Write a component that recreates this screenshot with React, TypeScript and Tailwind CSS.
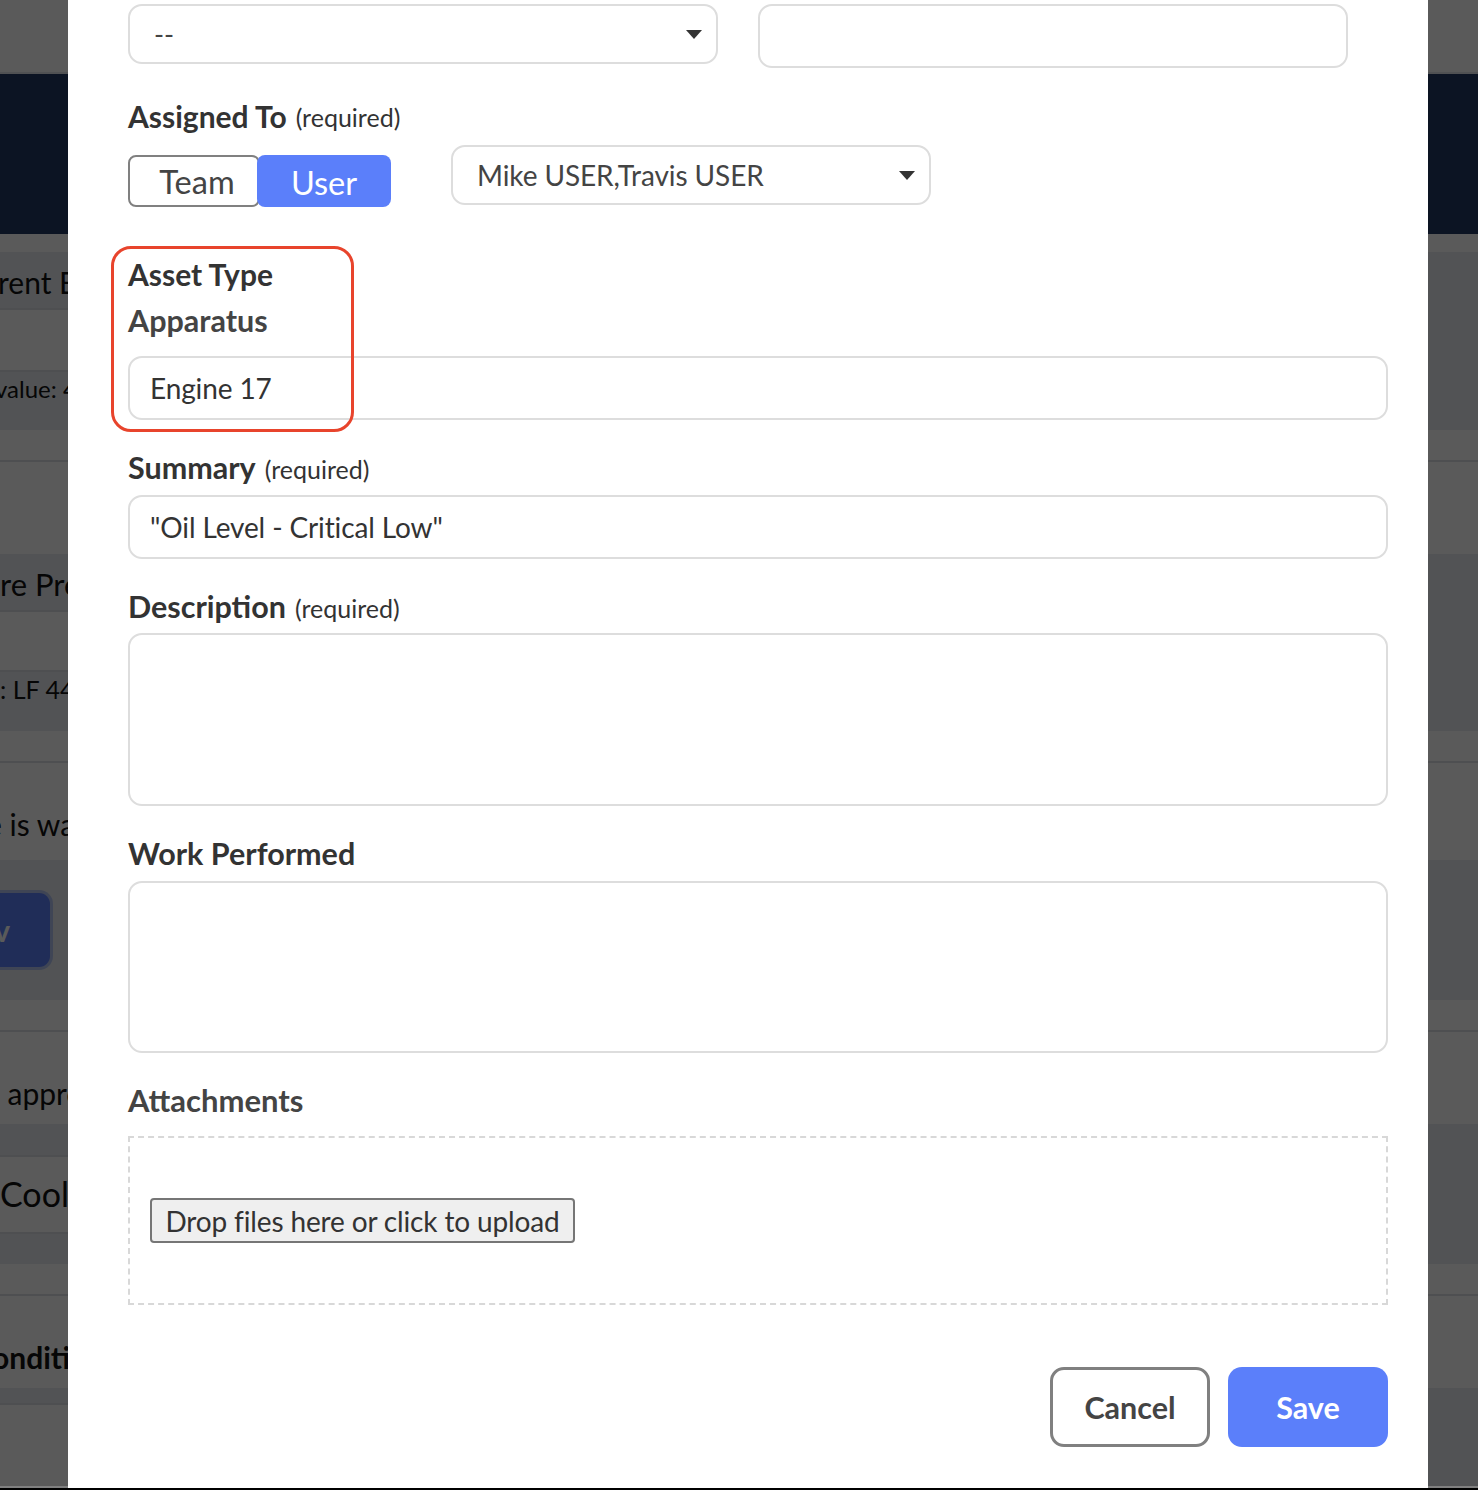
const lato = "font-['Lato','Noto_Sans',sans-serif]";

function Caret() {
  return (
    <svg width="16" height="9" viewBox="0 0 16 9" className="shrink-0">
      <polygon points="0,0 16,0 8,9" fill="#333333" />
    </svg>
  );
}

function Label({
  children,
  hint,
  className = "text-[30.5px] text-[#333333]",
}: {
  children: React.ReactNode;
  hint?: boolean;
  className?: string;
}) {
  return (
    <div className="flex h-[36px] items-center gap-[9px] pb-[2px]">
      <span className={`font-bold ${className}`}>{children}</span>
      {hint && <span className="mt-[4px] text-[25px] text-[#333333]">(required)</span>}
    </div>
  );
}

function Select({ value, className }: { value: string; className: string }) {
  return (
    <div
      className={`flex h-[60px] items-center justify-between rounded-[14px] border-2 border-[#dddddd] bg-white text-[#444444] ${className}`}
    >
      <span>{value}</span>
      <Caret />
    </div>
  );
}

function TextField({ value }: { value: string }) {
  return (
    <div className="flex h-[64px] items-center rounded-[14px] border-2 border-[#dddddd] bg-white pl-[20px] text-[28px] tracking-[-0.12px] text-[#333333]">
      {value}
    </div>
  );
}

function Modal() {
  return (
    <div
      className={`absolute top-0 left-[68px] flex h-[1488px] w-[1360px] flex-col bg-white pt-[4px] pr-[40px] pl-[60px] ${lato}`}
    >
      <div className="flex items-start gap-[40px]">
        <Select value="--" className="w-[590px] pr-[14px] pl-[24px] text-[27px]" />
        <div className="h-[64px] w-[590px] rounded-[14px] border-2 border-[#dddddd]" />
      </div>

      <div className="mt-[31px]">
        <Label hint className="text-[30px] text-[#333333]">
          Assigned To
        </Label>
      </div>
      <div className="mt-[10px] flex items-start gap-[60px]">
        <div className="mt-[10px] flex h-[52px] text-[32.5px]">
          <div className="flex w-[132px] items-center justify-center rounded-[8px] border-2 border-[#808080] pt-[2px] pl-[6px] text-[#444444]">
            Team
          </div>
          <div className="-ml-[3px] flex w-[134px] items-center justify-center rounded-[8px] bg-[#5b7ffa] pt-[4px] text-white">
            User
          </div>
        </div>
        <Select
          value="Mike USER,Travis USER"
          className="w-[480px] pr-[14px] pl-[24px] text-[28px] tracking-[-0.1px]"
        />
      </div>

      <div className="mt-[50px]">
        <Label className="text-[30px] text-[#333333]">Asset Type</Label>
      </div>
      <div className="mt-[11px]">
        <Label className="text-[30.5px] text-[#444444]">Apparatus</Label>
      </div>
      <div className="mt-[16px]">
        <TextField value="Engine 17" />
      </div>

      <div className="mt-[31px]">
        <Label hint>Summary</Label>
      </div>
      <div className="mt-[8px]">
        <TextField value={'"Oil Level - Critical Low"'} />
      </div>

      <div className="mt-[31px]">
        <Label hint>Description</Label>
      </div>
      <textarea className="mt-[7px] block h-[173px] w-full resize-none rounded-[14px] border-2 border-[#dddddd]" />

      <div className="mt-[31px]">
        <Label>Work Performed</Label>
      </div>
      <textarea className="mt-[8px] block h-[172px] w-full resize-none rounded-[14px] border-2 border-[#dddddd]" />

      <div className="mt-[30px]">
        <Label className="text-[31px] text-[#444444]">Attachments</Label>
      </div>
      <div className="mt-[17px] flex h-[169px] items-center border-2 border-dashed border-[#d8d8d8] pl-[20px]">
        <button className="h-[45px] w-[425px] rounded-[4px] border-2 border-[#767676] bg-[#efefef] pb-[3px] text-[28px] tracking-[-0.15px] text-[#333333]">
          Drop files here or click to upload
        </button>
      </div>

      <div className="mt-[62px] flex justify-end gap-[18px]">
        <button className="h-[80px] w-[160px] rounded-[14px] border-[3px] border-[#808080] bg-white pt-[2px] text-[30.5px] font-bold text-[#444444]">
          Cancel
        </button>
        <button className="h-[80px] w-[160px] rounded-[14px] bg-[#5b7ffa] pt-[2px] text-[30.5px] font-bold text-white">
          Save
        </button>
      </div>

      {/* annotation over the asset fields */}
      <div className="absolute top-[246px] left-[43px] h-[186px] w-[243px] rounded-[20px] border-[3px] border-[#e8442c]" />
    </div>
  );
}

// page behind the dialog, only the slivers either side of it show
function Page() {
  return (
    <div className={`flex flex-col text-[#111111] ${lato}`}>
      <div className="h-[72px] bg-white" />
      <div className="h-[2px] bg-[#e2e4ea]" />
      <div className="h-[160px] bg-[#223963]" />
      <div className="h-[18px] bg-white" />
      <div className="h-[178px] bg-[#e8ebf1]">
        <div className="flex h-[58px] w-[68px] items-center overflow-hidden border-b-2 border-[#dcdfe6] pt-[4px] text-[30px] whitespace-nowrap">
          <span className="-ml-[2px]">rent Engine</span>
        </div>
        <div className="h-[62px] w-[68px] border-b-2 border-[#dcdfe6] bg-white" />
        <div className="-mt-[1px] w-[68px] overflow-hidden text-[24px] whitespace-nowrap">
          <span className="-ml-[5px]">value: 4</span>
        </div>
      </div>
      <div className="h-[30px] bg-white" />
      <div className="h-[2px] bg-[#dcdfe6]" />
      <div className="h-[92px] bg-white" />
      <div className="h-[177px] bg-[#e8ebf1]">
        <div className="flex h-[58px] w-[68px] items-center overflow-hidden border-b-2 border-[#dcdfe6] pt-[4px] text-[31px] whitespace-nowrap">
          <span>re Pres</span>
        </div>
        <div className="h-[60px] w-[68px] border-b-2 border-[#dcdfe6] bg-white" />
        <div className="-mt-[1px] w-[68px] overflow-hidden text-[25px] whitespace-nowrap">: LF 44</div>
      </div>
      <div className="h-[30px] bg-white" />
      <div className="h-[2px] bg-[#dcdfe6]" />
      <div className="flex h-[97px] items-end overflow-hidden bg-white pb-[13px] text-[30px] whitespace-nowrap">
        <span className="-ml-[14px]">e is wa</span>
      </div>
      <div className="flex h-[140px] items-center bg-[#e8ebf1]">
        <div className="flex h-[80px] w-[53px] items-center justify-end rounded-r-[14px] border-[3px] border-l-0 border-[#b2c3f0] bg-[#5b7ffa] pr-[40px] text-[30px] font-bold text-white">
          v
        </div>
      </div>
      <div className="h-[30px] bg-white" />
      <div className="h-[2px] bg-[#dcdfe6]" />
      <div className="flex h-[92px] items-end overflow-hidden bg-white pb-[8px] text-[30px] whitespace-nowrap">
        <span className="-ml-[16px]">e appro</span>
      </div>
      <div className="h-[140px] bg-[#e8ebf1]">
        <div className="h-[31px]" />
        <div className="flex h-[79px] w-[68px] items-center overflow-hidden border-y-2 border-[#dcdfe6] bg-white pb-[3px] text-[34px] whitespace-nowrap">
          Coolant
        </div>
      </div>
      <div className="h-[30px] bg-white" />
      <div className="h-[2px] bg-[#dcdfe6]" />
      <div className="flex h-[92px] items-end overflow-hidden bg-white pb-[8px] text-[30px] font-bold whitespace-nowrap">
        <span className="-ml-[8px]">onditio</span>
      </div>
      <div className="h-[98px] bg-[#e8ebf1]">
        <div className="h-[17px] w-[68px] border-b-2 border-[#dcdfe6]" />
        <div className="h-[81px] w-[68px] bg-white" />
      </div>
      <div className="h-[2px] bg-[#808080]" />
      <div className="h-[2px] bg-black" />
    </div>
  );
}

export default function App() {
  return (
    <div className="relative h-[1490px] overflow-hidden">
      <Page />
      <div className="absolute inset-x-0 top-0 h-[1486px] bg-[#000000a5]" />
      <Modal />
    </div>
  );
}
